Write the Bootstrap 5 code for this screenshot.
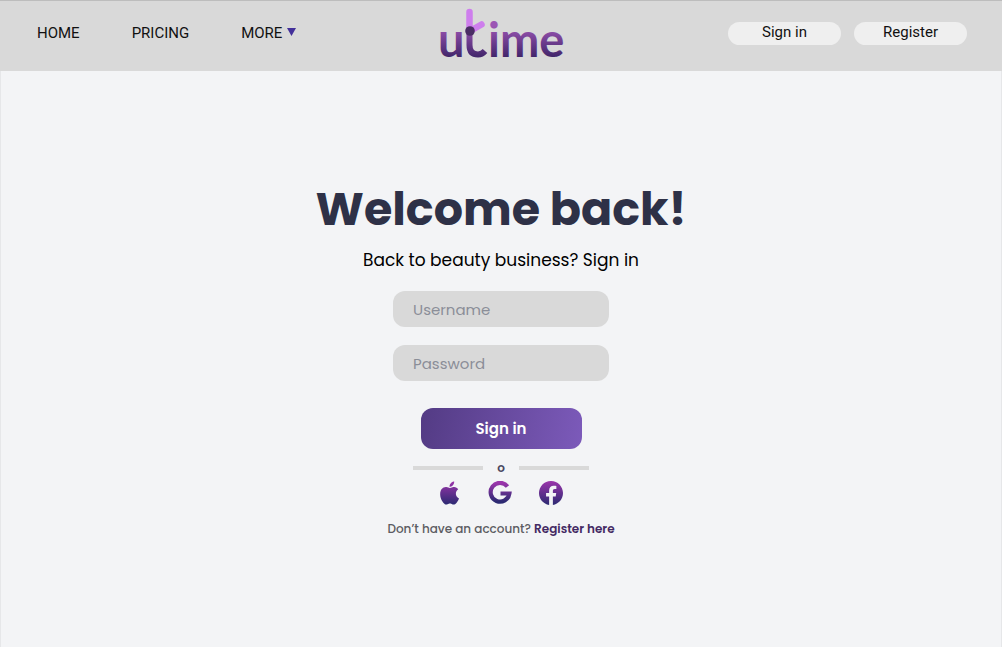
<!DOCTYPE html>
<html lang="en">
<head>
<meta charset="utf-8">
<meta name="viewport" content="width=device-width, initial-scale=1">
<title>utime – Sign in</title>
<link href="https://cdn.jsdelivr.net/npm/bootstrap@5.3.0/dist/css/bootstrap.min.css" rel="stylesheet">
<style>
  body { background: #f3f4f6; font-family: Poppins, Inter, sans-serif; color: #000; box-shadow: inset 1px 0 #e6e7e9, inset -1px 0 #e6e7e9; min-height: 100vh; }
  .topbar { background: #d9d9d9; border-top: 1px solid #bdbdbd; height: 71px; padding: 0 35px 0 37px; font: 15px/20px Roboto, sans-serif; }
  .topbar a { color: #111; text-decoration: none; }
  .main-links { gap: 52px; padding-bottom: 6px; }
  .caret { color: #43309a; }
  .pills { gap: 13px; padding-bottom: 5px; }
  .pill { width: 113px; height: 23px; border: 0; border-radius: 12px; background: #efefef; color: #111; padding: 0 0 3px; line-height: 20px; }
  .logo-link { padding-bottom: 1px; }
  .signin { padding-top: 108px; }
  .title { font-size: 46px; line-height: 60px; font-weight: 700; color: #2e3147; margin: 0; }
  .subtitle { font-size: 17px; line-height: 26px; margin: 8px 0 18px; }
  .field { width: 216px; height: 36px; border: 0; border-radius: 12px; background: #d9d9d9; padding: 0 20px; font-size: 15px; margin-bottom: 18px; }
  .field:focus { background: #d9d9d9; }
  .field::placeholder { color: #8b8e98; opacity: 1; }
  .submit { width: 161px; height: 41px; border: 0; border-radius: 12px; margin-top: 9px; padding-top: 2px; background: linear-gradient(100deg, #533b84, #7c5aba); color: #fff; font-size: 15px; font-weight: 600; }
  .divider { width: 176px; gap: 14px; height: 20px; margin-top: 9px; font-size: 12px; line-height: 20px; font-weight: 600; color: #4a4860; }
  .rule { height: 4px; background: #d9d9d9; }
  .socials { gap: 24px; margin-top: 3px; }
  .socials a { line-height: 0; }
  .note { font-size: 12px; line-height: 18px; font-weight: 500; color: #5c5c62; margin: 15px 0 0; }
  .note a { color: #442a63; text-decoration: none; font-weight: 600; }
  .wordmark { font: 700 47px Lato, sans-serif; }
</style>
</head>
<body>
<header class="topbar row g-0 align-items-center">
  <nav class="col d-flex align-items-center main-links">
    <a href="#">HOME</a>
    <a href="#">PRICING</a>
    <a href="#" class="d-flex gap-1 text-nowrap">MORE <svg class="caret" width="12" height="20" viewBox="0 0 12 20" aria-hidden="true"><path fill="currentColor" d="M1 5h9l-4.500 8z"/></svg></a>
  </nav>
  <a href="#" class="col-auto logo-link" aria-label="utime">
    <svg class="d-block" width="128" height="60" viewBox="0 0 128 60">
      <defs>
        <linearGradient id="ink" gradientUnits="userSpaceOnUse" x1="0" y1="20" x2="0" y2="52"><stop stop-color="#9c55b4"/><stop offset="1" stop-color="#3f2468"/></linearGradient>
      </defs>
      <text class="wordmark" x="0" y="51" fill="url(#ink)">u</text>
      <path d="M31.500 26V39q0 9.500 8.500 9.500q4 0 7-3.500" fill="none" stroke="url(#ink)" stroke-width="6"/>
      <path d="M31.500 6V25M32 25L43.500 18.500" fill="none" stroke="#ce7eed" stroke-width="6.500" stroke-linecap="round"/>
      <circle cx="32" cy="25" r="4.800" fill="#4b2d65"/>
      <text class="wordmark" x="50" y="51" fill="url(#ink)">ime</text>
    </svg>
  </a>
  <div class="col d-flex justify-content-end pills">
    <button type="button" class="pill">Sign in</button>
    <button type="button" class="pill">Register</button>
  </div>
</header>

<main class="signin d-flex flex-column align-items-center text-center">
  <h1 class="title">Welcome back!</h1>
  <p class="subtitle">Back to beauty business? Sign in</p>
  <form class="d-flex flex-column align-items-center">
    <input class="form-control field" id="username" type="text" placeholder="Username" aria-label="Username">
    <input class="form-control field" id="password" type="password" placeholder="Password" aria-label="Password">
    <button type="submit" class="submit">Sign in</button>
  </form>
  <div class="divider d-flex align-items-center">
    <span class="rule flex-fill"></span><span>o</span><span class="rule flex-fill"></span>
  </div>
  <div class="socials d-flex align-items-center">
    <svg width="0" height="0" class="position-absolute" aria-hidden="true"><defs><linearGradient id="brand" x1="0" y1="0" x2="0" y2="1"><stop stop-color="#9b35ab"/><stop offset="1" stop-color="#2c2a72"/></linearGradient></defs></svg>
    <a href="#" aria-label="Sign in with Apple"><svg width="26" height="24" viewBox="0 0 18 16"><path fill="url(#brand)" d="M11.182.008C11.148-.03 9.923.023 8.857 1.180c-1.066 1.156-.902 2.482-.878 2.516s1.520.087 2.475-1.258.762-2.391.728-2.430m3.314 11.733c-.048-.096-2.325-1.234-2.113-3.422s1.675-2.789 1.698-2.854-.597-.790-1.254-1.157a3.700 3.700 0 0 0-1.563-.434c-.108-.003-.483-.095-1.254.116-.508.139-1.653.589-1.968.607-.316.018-1.256-.522-2.267-.665-.647-.125-1.333.131-1.824.328-.490.196-1.422.754-2.074 2.237-.652 1.482-.311 3.830-.067 4.560s.625 1.924 1.273 2.796c.576.984 1.340 1.667 1.659 1.899s1.219.386 1.843.067c.502-.308 1.408-.485 1.766-.472.357.013 1.061.154 1.782.539.571.197 1.111.115 1.652-.105.541-.221 1.324-1.059 2.238-2.758q.520-1.185.473-1.282"/></svg></a>
    <a href="#" aria-label="Sign in with Google"><svg width="26" height="24" viewBox="1 0 26 24"><path fill="none" stroke="url(#brand)" stroke-width="4.200" d="M20.500 5.500A9.400 9.400 0 1 0 22.400 12.500H13.500"/></svg></a>
    <a href="#" aria-label="Sign in with Facebook"><svg width="26" height="24" viewBox="-.5 0 17 16"><path fill="url(#brand)" d="M16 8.049c0-4.446-3.582-8.050-8-8.050C3.580 0-.002 3.603-.002 8.050c0 4.017 2.926 7.347 6.750 7.951v-5.625h-2.030V8.050H6.750V6.275c0-2.017 1.195-3.131 3.022-3.131.876 0 1.791.157 1.791.157v1.980h-1.009c-.993 0-1.303.621-1.303 1.258v1.510h2.218l-.354 2.326H9.250V16c3.824-.604 6.750-3.934 6.750-7.951"/></svg></a>
  </div>
  <p class="note">Don’t have an account? <a href="#">Register here</a></p>
</main>
<script src="https://cdn.jsdelivr.net/npm/bootstrap@5.3.0/dist/js/bootstrap.bundle.min.js"></script>
</body>
</html>
